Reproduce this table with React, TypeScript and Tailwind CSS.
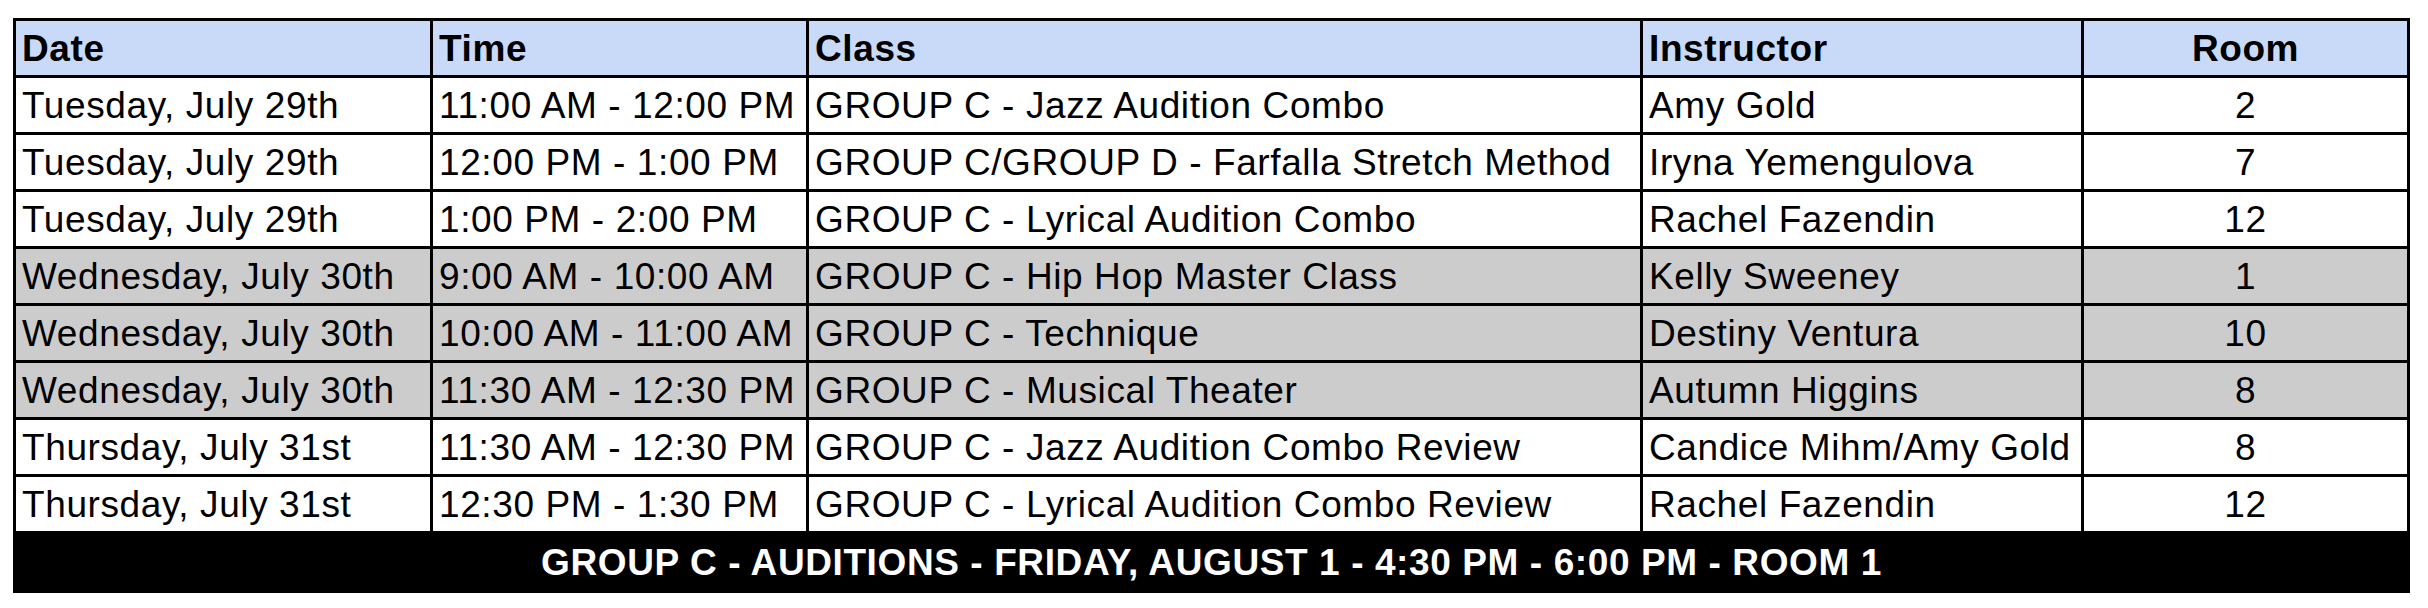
import React from "react";

type Row = { date: string; time: string; cls: string; instructor: string; room: string; gray?: boolean };

const rows: Row[] = [
  { date: "Tuesday, July 29th", time: "11:00 AM - 12:00 PM", cls: "GROUP C - Jazz Audition Combo", instructor: "Amy Gold", room: "2" },
  { date: "Tuesday, July 29th", time: "12:00 PM - 1:00 PM", cls: "GROUP C/GROUP D - Farfalla Stretch Method", instructor: "Iryna Yemengulova", room: "7" },
  { date: "Tuesday, July 29th", time: "1:00 PM - 2:00 PM", cls: "GROUP C - Lyrical Audition Combo", instructor: "Rachel Fazendin", room: "12" },
  { date: "Wednesday, July 30th", time: "9:00 AM - 10:00 AM", cls: "GROUP C - Hip Hop Master Class", instructor: "Kelly Sweeney", room: "1", gray: true },
  { date: "Wednesday, July 30th", time: "10:00 AM - 11:00 AM", cls: "GROUP C - Technique", instructor: "Destiny Ventura", room: "10", gray: true },
  { date: "Wednesday, July 30th", time: "11:30 AM - 12:30 PM", cls: "GROUP C - Musical Theater", instructor: "Autumn Higgins", room: "8", gray: true },
  { date: "Thursday, July 31st", time: "11:30 AM - 12:30 PM", cls: "GROUP C - Jazz Audition Combo Review", instructor: "Candice Mihm/Amy Gold", room: "8" },
  { date: "Thursday, July 31st", time: "12:30 PM - 1:30 PM", cls: "GROUP C - Lyrical Audition Combo Review", instructor: "Rachel Fazendin", room: "12" },
];

function Cell({ children, bg, center, bold }: { children: React.ReactNode; bg: string; center?: boolean; bold?: boolean }) {
  return (
    <div
      className={`${bg} h-[54px] flex items-center whitespace-nowrap overflow-hidden text-black ${
        center ? "justify-center" : "justify-start pl-[6px]"
      } ${bold ? "font-bold" : "font-normal"}`}
    >
      {children}
    </div>
  );
}

export default function App() {
  return (
    <div className="w-[2428px] h-[608px] bg-white pt-[18px] pl-[13px] font-['Liberation_Sans',Arial,sans-serif] text-[37px] leading-none tracking-[0.6px]">
      <div className="w-[2397px] bg-black p-[3px]">
        <div className="grid grid-cols-[414px_373px_831px_438px_323px] gap-[3px]">
          <Cell bg="bg-[#c9daf8]" bold>Date</Cell>
          <Cell bg="bg-[#c9daf8]" bold>Time</Cell>
          <Cell bg="bg-[#c9daf8]" bold>Class</Cell>
          <Cell bg="bg-[#c9daf8]" bold>Instructor</Cell>
          <Cell bg="bg-[#c9daf8]" bold center>Room</Cell>
          {rows.map((r, i) => {
            const bg = r.gray ? "bg-[#cccccc]" : "bg-white";
            return (
              <React.Fragment key={i}>
                <Cell bg={bg}>{r.date}</Cell>
                <Cell bg={bg}>{r.time}</Cell>
                <Cell bg={bg}>{r.cls}</Cell>
                <Cell bg={bg}>{r.instructor}</Cell>
                <Cell bg={bg} center>{r.room}</Cell>
              </React.Fragment>
            );
          })}
          <div className="col-span-5 h-[56px] bg-black flex items-center justify-center text-white font-bold whitespace-nowrap">
            GROUP C - AUDITIONS - FRIDAY, AUGUST 1 - 4:30 PM - 6:00 PM - ROOM 1
          </div>
        </div>
      </div>
    </div>
  );
}
